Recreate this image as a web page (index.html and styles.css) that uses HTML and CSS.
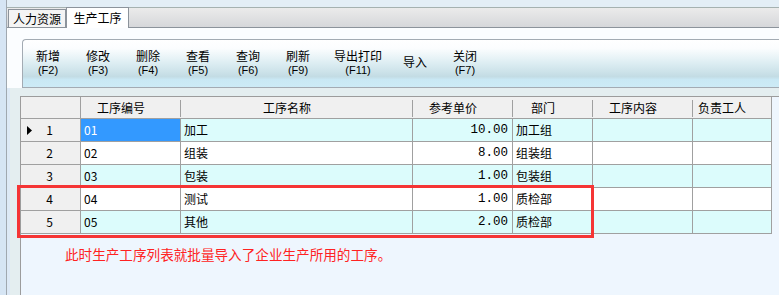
FILE: index.html
```html
<!DOCTYPE html>
<html lang="zh-CN">
<head>
  <meta charset="UTF-8">
  <title>生产工序</title>
  <link rel="stylesheet" href="styles.css">
</head>
<body>
  <div class="app">
    <div class="side"></div>
    <div class="window">

      <div class="tabs">
        <div class="tab">人力资源</div>
        <div class="tab active">生产工序</div>
      </div>

      <div class="page">
        <div class="tool-area">
          <div class="toolbar">
            <button class="tb-btn"><span>新增</span><span class="key">(F2)</span></button>
            <button class="tb-btn"><span>修改</span><span class="key">(F3)</span></button>
            <button class="tb-btn"><span>删除</span><span class="key">(F4)</span></button>
            <button class="tb-btn"><span>查看</span><span class="key">(F5)</span></button>
            <button class="tb-btn"><span>查询</span><span class="key">(F6)</span></button>
            <button class="tb-btn"><span>刷新</span><span class="key">(F9)</span></button>
            <button class="tb-btn tb-wide"><span>导出打印</span><span class="key">(F11)</span></button>
            <button class="tb-btn tb-narrow"><span>导入</span></button>
            <button class="tb-btn tb-close"><span>关闭</span><span class="key">(F7)</span></button>
          </div>
        </div>

        <div class="grid-area">
          <div class="grid">
            <div class="table">
              <div class="cell head corner"></div>
              <div class="cell head">工序编号</div>
              <div class="cell head">工序名称</div>
              <div class="cell head">参考单价</div>
              <div class="cell head">部门</div>
              <div class="cell head">工序内容</div>
              <div class="cell head last">负责工人</div>

              <div class="cell rowhead current">
                <svg class="pointer" width="6" height="9" viewBox="0 0 6 9"><polygon points="0,0 5,4.5 0,9" fill="#000"/></svg>
                <span class="num">1</span>
              </div>
              <div class="cell odd sel">01</div>
              <div class="cell odd">加工</div>
              <div class="cell odd price">10.00</div>
              <div class="cell odd">加工组</div>
              <div class="cell odd"></div>
              <div class="cell odd"></div>

              <div class="cell rowhead"><span class="num">2</span></div>
              <div class="cell">02</div>
              <div class="cell">组装</div>
              <div class="cell price">8.00</div>
              <div class="cell">组装组</div>
              <div class="cell"></div>
              <div class="cell"></div>

              <div class="cell rowhead"><span class="num">3</span></div>
              <div class="cell odd">03</div>
              <div class="cell odd">包装</div>
              <div class="cell odd price">1.00</div>
              <div class="cell odd">包装组</div>
              <div class="cell odd"></div>
              <div class="cell odd"></div>

              <div class="cell rowhead"><span class="num">4</span></div>
              <div class="cell">04</div>
              <div class="cell">测试</div>
              <div class="cell price">1.00</div>
              <div class="cell">质检部</div>
              <div class="cell"></div>
              <div class="cell"></div>

              <div class="cell rowhead"><span class="num">5</span></div>
              <div class="cell odd">05</div>
              <div class="cell odd">其他</div>
              <div class="cell odd price">2.00</div>
              <div class="cell odd">质检部</div>
              <div class="cell odd"></div>
              <div class="cell odd"></div>
            </div>

            <div class="red-box"></div>
            <p class="note">此时生产工序列表就批量导入了企业生产所用的工序。</p>
          </div>
        </div>
      </div>

    </div>
  </div>
</body>
</html>
```

FILE: styles.css
```css
body {
  margin: 0;
  font-family: "Noto Sans CJK SC", "Liberation Sans", sans-serif;
  font-size: 12px;
  color: #000;
  background-color: #d6e5f4;
}
.app {
  display: flex;
  width: 779px;
  height: 295px;
  overflow: hidden;
}
.side {
  flex: none;
  width: 6px;
  background-color: #d6e5f4;
}
.window {
  flex: 1;
  min-width: 0;
  display: flex;
  flex-direction: column;
  padding-top: 7px;
  border-left: 1px solid #a0a8b0;
  background-color: #e3eef6;
}

/* tabs */
.tabs {
  flex: none;
  display: flex;
  align-items: flex-end;
  height: 19px;
  padding-left: 1px;
  border-top: 1px solid #a5b1b0;
  border-bottom: 1px solid #8c939b;
  background: linear-gradient(#ebebeb, #d6d7da);
}
.tab {
  box-sizing: border-box;
  width: 58px;
  height: 18px;
  border: 1px solid #8c939b;
  border-bottom: none;
  background: #f4f4f4;
  text-align: center;
  line-height: 18px;
  font-size: 12px;
}
.tab.active {
  width: 63px;
  height: 21px;
  margin-bottom: -1px;
  line-height: 19px;
  background: #fff;
}

/* page */
.page {
  flex: 1;
  display: flex;
  flex-direction: column;
}
.tool-area {
  flex: none;
  padding: 11px 0 0 15px;
  background-color: #fbfdff;
}
.toolbar {
  box-sizing: border-box;
  display: flex;
  height: 49px;
  border: 1px solid #a3abb3;
  border-right: none;
  border-top-left-radius: 4px;
  background: linear-gradient(#ffffff 0%, #fbfdfe 18%, #dcedf2 50%, #c3dce4 78%, #c9e8f4 84%, #cdebf6 100%);
}
.tb-btn {
  flex: none;
  width: 50px;
  display: flex;
  flex-direction: column;
  align-items: center;
  justify-content: center;
  padding: 0;
  border: none;
  background: none;
  font-family: "Liberation Sans", "Noto Sans CJK SC", sans-serif;
  font-size: 12px;
  line-height: 13.5px;
  color: #000;
}
.tb-btn .key {
  font-size: 11px;
  line-height: 12px;
}
.tb-wide {
  width: 70px;
}
.tb-narrow {
  width: 44px;
}
.tb-close {
  width: 56px;
}

/* grid */
.grid-area {
  flex: 1;
  display: flex;
  flex-direction: column;
  padding: 8px 0 0 10px;
  border-left: 3px solid #dde9f6;
  background-color: #e4eef0;
}
.grid {
  flex: 1;
  position: relative;
  border-top: 1px solid #9c9c9c;
  border-left: 1px solid #9c9c9c;
  background-color: #eef6fe;
}
.table {
  display: grid;
  grid-template-columns: 60px 100px 232px 100px 80px 100px 79px;
  width: max-content;
}
.cell {
  box-sizing: border-box;
  height: 23px;
  padding: 0 3px;
  border-right: 1px solid #a0a0a0;
  border-bottom: 1px solid #a0a0a0;
  background-color: #fff;
  line-height: 22px;
  white-space: nowrap;
  overflow: hidden;
}
.cell.odd {
  background-color: #dcfcfc;
}
.cell.sel {
  background-color: #3399ff;
  color: #fff;
}
.cell.price {
  padding-right: 4px;
  text-align: right;
  font-family: "Liberation Mono", monospace;
  font-size: 12.5px;
}
.head {
  height: 22px;
  padding: 0 20px 0 0;
  border-right: none;
  text-align: center;
  line-height: 21px;
  background: linear-gradient(#a0a0a0, #a0a0a0) right 3px / 1px 17px no-repeat, #f0f0f0;
}
.head.corner,
.head.last {
  border-right: 1px solid #a0a0a0;
  background: #f0f0f0;
}
.rowhead {
  display: flex;
  align-items: center;
  padding: 0;
  background-color: #f0f0f0;
}
.rowhead .num {
  flex: 1;
  text-align: center;
  padding-right: 2px;
}
.rowhead.current .pointer {
  flex: none;
  margin-left: 6px;
}
.rowhead.current .num {
  padding-right: 14px;
}

/* annotation */
.red-box {
  position: absolute;
  left: -4px;
  top: 88px;
  box-sizing: border-box;
  width: 577px;
  height: 53px;
  border: 3px solid #f53535;
  pointer-events: none;
}
.note {
  position: absolute;
  left: 44px;
  top: 149px;
  margin: 0;
  font-size: 13.6px;
  line-height: 16px;
  color: #ff2222;
  white-space: nowrap;
}
```
